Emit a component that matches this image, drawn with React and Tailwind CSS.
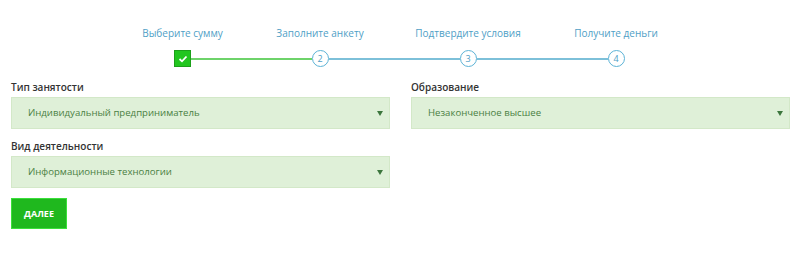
import React from 'react';

const steps = [
  { label: 'Выберите сумму', w: 'w-[127px]' },
  { label: 'Заполните анкету', w: 'w-[148px]' },
  { label: 'Подтвердите условия', w: 'w-[148px]' },
  { label: 'Получите деньги', w: 'w-[148px]' },
];

const Stepper = () => (
  <div className="flex pl-[119px] pt-[26px]">
    {steps.map((step, i) => {
      const done = i === 0;
      const leftLine = i === 0 ? 'bg-transparent' : i === 1 ? 'bg-[#6ed36a]' : 'bg-[#7dc0d9]';
      const rightLine = i === 3 ? 'bg-transparent' : i === 0 ? 'bg-[#6ed36a]' : 'bg-[#7dc0d9]';
      return (
        <div key={step.label} className={`${step.w} flex flex-col items-center`}>
          <span className="text-[10px] leading-[14px] text-[#4fa0c6] whitespace-nowrap">{step.label}</span>
          <div className="flex items-center w-full mt-[10px] h-[17px]">
            <div className={`flex-1 h-[2px] ${leftLine}`} />
            {done ? (
              <div className="w-[17px] h-[17px] bg-[#22c61f] border border-[#1ca01a] flex items-center justify-center">
                <svg width="10" height="8" viewBox="0 0 10 8">
                  <path d="M1.5 4 L4 6.3 L8.5 1.5" stroke="#fff" strokeWidth="1.8" fill="none" />
                </svg>
              </div>
            ) : (
              <div className="w-[17px] h-[17px] rounded-full border-[1.5px] border-[#5cb3d6] bg-white flex items-center justify-center text-[9px] text-[#4fa0c6] leading-none">
                {i + 1}
              </div>
            )}
            <div className={`flex-1 h-[2px] ${rightLine}`} />
          </div>
        </div>
      );
    })}
  </div>
);

const Select = ({ label, value }) => (
  <div className="flex flex-col">
    <label className="text-[10px] font-semibold text-[#333] leading-[14px] mb-[3px]">{label}</label>
    <div className="h-[32px] bg-[#dff0d8] border border-[#d3e8c8] flex items-center justify-between pl-[16px] pr-[6px]">
      <span className="text-[9.6px] text-[#4a8043]">{value}</span>
      <svg width="6" height="5" viewBox="0 0 6 5">
        <path d="M0 0 H6 L3 5 Z" fill="#3c763d" />
      </svg>
    </div>
  </div>
);

export default function App() {
  return (
    <div className="w-[800px] h-[272px] bg-white font-['Open_Sans',sans-serif]">
      <Stepper />
      <div className="grid grid-cols-2 gap-x-[21px] gap-y-[10px] pl-[11px] pr-[10px] mt-[13px]">
        <Select label="Тип занятости" value="Индивидуальный предприниматель" />
        <Select label="Образование" value="Незаконченное высшее" />
        <Select label="Вид деятельности" value="Информационные технологии" />
      </div>
      <div className="pl-[11px] mt-[10px]">
        <button className="w-[56px] h-[31px] bg-[#1fb81e] border border-[#3ae03a] text-white text-[9px] font-bold">
          ДАЛЕЕ
        </button>
      </div>
    </div>
  );
}
